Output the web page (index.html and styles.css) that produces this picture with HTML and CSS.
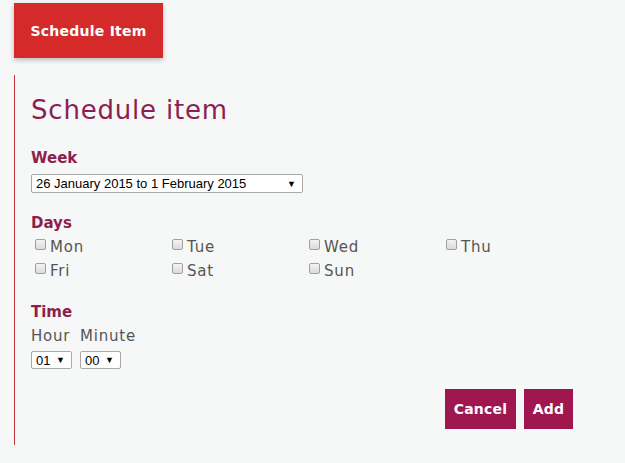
FILE: index.html
```html
<!DOCTYPE html>
<html>
<head>
<meta charset="utf-8">
<link rel="stylesheet" href="styles.css">
</head>
<body>
<div class="page">
  <button class="top-btn">Schedule Item</button>
  <section class="panel">
    <h1 class="title">Schedule item</h1>
    <div class="week-group">
      <div class="label">Week</div>
      <div class="select wide"><span>26 January 2015 to 1 February 2015</span><span class="arrow">&#9660;</span></div>
    </div>
    <div class="days-group">
      <div class="label">Days</div>
      <div class="days">
        <label class="day"><span class="box"></span>Mon</label>
        <label class="day"><span class="box"></span>Tue</label>
        <label class="day"><span class="box"></span>Wed</label>
        <label class="day"><span class="box"></span>Thu</label>
        <label class="day"><span class="box"></span>Fri</label>
        <label class="day"><span class="box"></span>Sat</label>
        <label class="day"><span class="box"></span>Sun</label>
      </div>
    </div>
    <div class="time-group">
      <div class="label">Time</div>
      <div class="time-row">
        <div class="time-col hour">
          <div class="sub">Hour</div>
          <div class="select small"><span>01</span><span class="arrow">&#9660;</span></div>
        </div>
        <div class="time-col">
          <div class="sub">Minute</div>
          <div class="select small"><span>00</span><span class="arrow">&#9660;</span></div>
        </div>
      </div>
    </div>
    <div class="actions">
      <button class="btn cancel">Cancel</button>
      <button class="btn add">Add</button>
    </div>
  </section>
</div>
</body>
</html>
```
FILE: styles.css
```css
html, body {
  margin: 0;
  padding: 0;
  background: #f6f7f7;
}
body {
  font-family: "DejaVu Sans", "Noto Sans", sans-serif;
  color: #555;
}
.page {
  padding: 3px 0 0 14px;
  width: 559px;
}
.top-btn {
  display: block;
  width: 149px;
  height: 55px;
  background: #d52a2a;
  color: #fff;
  border: 0;
  font-family: inherit;
  font-weight: bold;
  font-size: 14px;
  letter-spacing: 0.25px;
  box-shadow: 0 2px 5px rgba(0,0,0,0.25);
  padding: 0;
}
.panel {
  margin-top: 17px;
  border-left: 1px solid #c4323b;
  padding: 19px 0 16px 16px;
}
.title {
  margin: 0;
  font-weight: normal;
  font-size: 26px;
  letter-spacing: 0.8px;
  color: #8c1f52;
  line-height: 32px;
}
.label {
  font-weight: bold;
  font-size: 15px;
  color: #8c1f4e;
  line-height: 18px;
}
.week-group {
  margin-top: 23px;
}
.select {
  display: flex;
  justify-content: space-between;
  align-items: center;
  box-sizing: border-box;
  border: 1px solid #a9a9a9;
  border-radius: 2px;
  background: #fff;
  font-family: "Liberation Sans", Arial, sans-serif;
  font-size: 13px;
  color: #000;
  padding: 0 6px 0 4px;
}
.select .arrow {
  font-size: 9px;
}
.wide {
  width: 272px;
  height: 19px;
  margin-top: 7px;
}
.days-group {
  margin-top: 21px;
}
.days {
  display: grid;
  grid-template-columns: repeat(4, 137px);
  padding-left: 4px;
  margin-top: 3px;
}
.day {
  display: flex;
  align-items: center;
  gap: 4px;
  font-size: 15px;
  letter-spacing: 0.8px;
  color: #555;
  line-height: 24px;
}
.box {
  width: 11px;
  height: 11px;
  margin-bottom: 5px;
  box-sizing: border-box;
  border: 1px solid #a0a0a0;
  border-radius: 2px;
  background: linear-gradient(#f4f4f4, #dadada);
}
.time-group {
  margin-top: 20px;
}
.time-row {
  display: flex;
  gap: 8px;
  margin-top: 5px;
}
.time-col.hour {
  width: 41px;
}
.sub {
  font-size: 15px;
  letter-spacing: 0.8px;
  color: #555;
  line-height: 20px;
  white-space: nowrap;
}
.small {
  width: 41px;
  height: 18px;
  margin-top: 5px;
}
.actions {
  display: flex;
  justify-content: flex-end;
  gap: 8px;
  margin-top: 20px;
}
.btn {
  height: 40px;
  background: #a01750;
  color: #fff;
  border: 0;
  font-family: inherit;
  font-weight: bold;
  font-size: 14px;
  letter-spacing: 0.2px;
  padding: 0;
}
.cancel {
  width: 71px;
}
.add {
  width: 49px;
}
```
